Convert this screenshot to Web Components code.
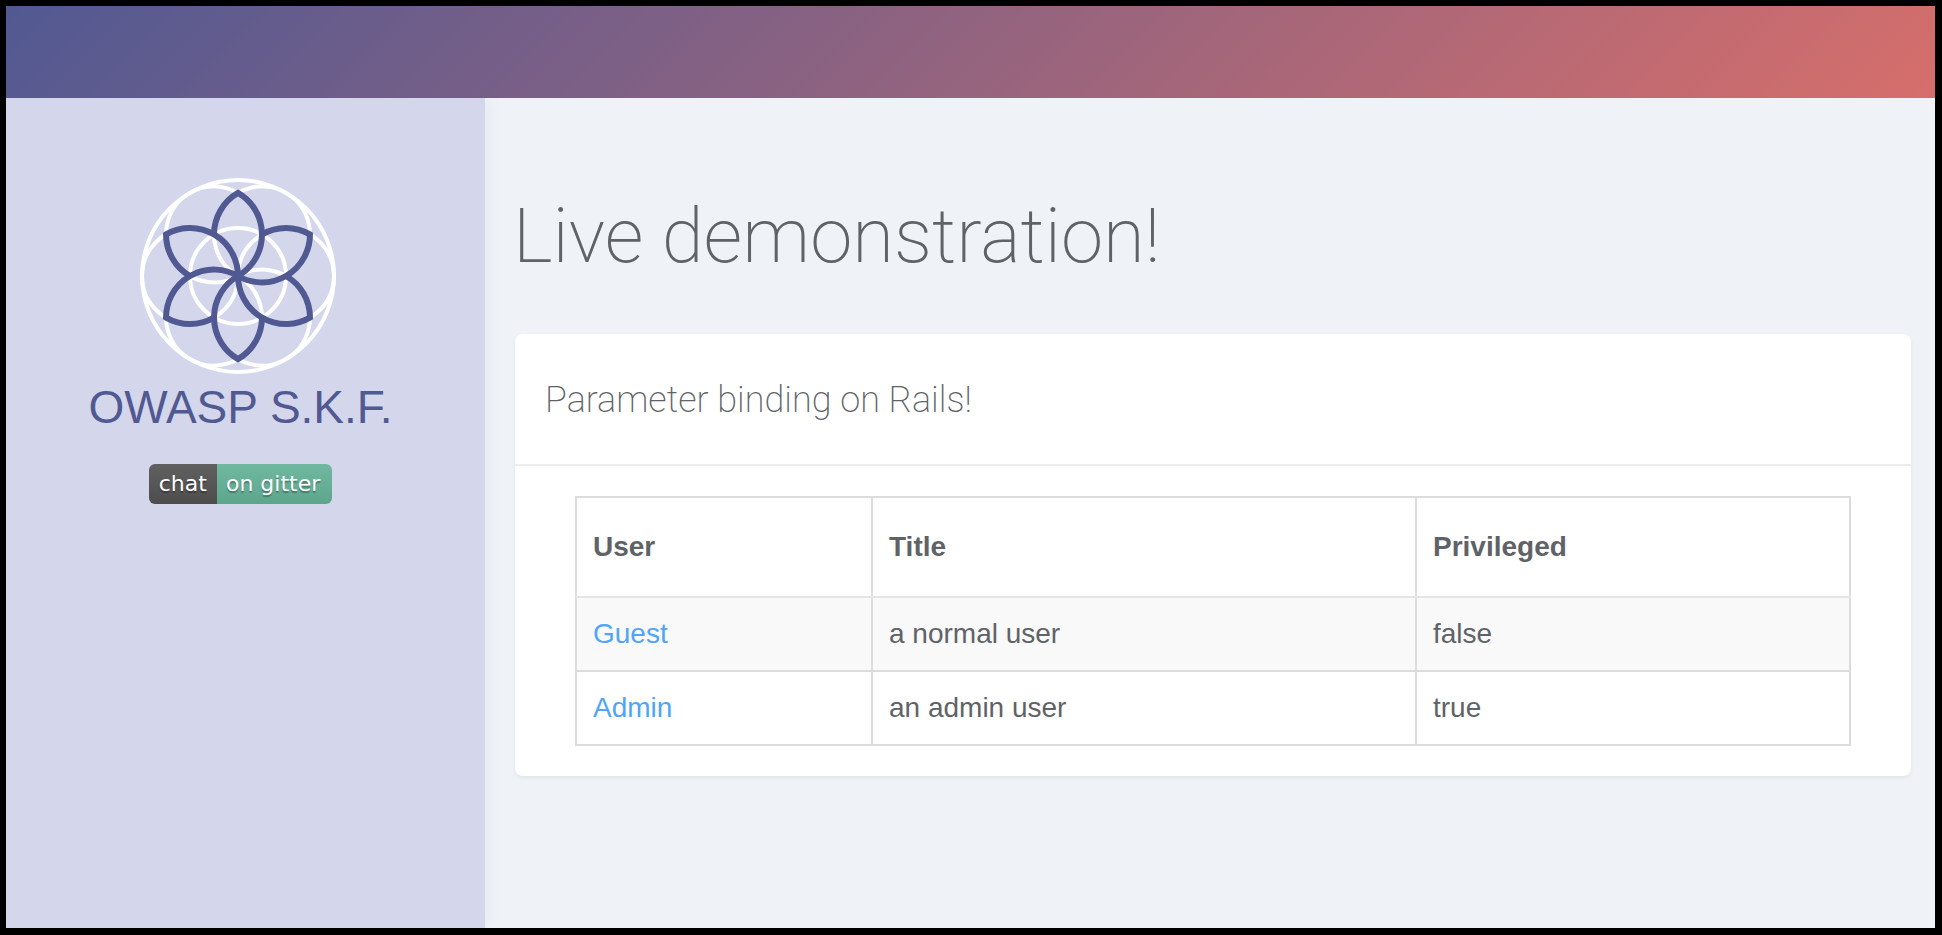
<!DOCTYPE html>
<html lang="en">
<head>
  <meta charset="utf-8">
  <title>Live demonstration!</title>
  <style>
    html, body {
      height: 100%;
      margin: 0;
    }
    body {
      background: #000;
      color: #5f6367;
      font-family: "Helvetica Neue", "Liberation Sans", Arial, sans-serif;
      font-size: 28px;
      line-height: 40px;
    }
  </style>
</head>
<body>
  <skf-app>
    <skf-sidebar slot="sidebar">
      <skf-logo></skf-logo>
      <skf-badge label="chat" message="on gitter"></skf-badge>
    </skf-sidebar>
    <skf-card heading="Parameter binding on Rails!">
      <user-table></user-table>
    </skf-card>
  </skf-app>

  <script>
    class SkfApp extends HTMLElement {
      constructor() {
        super();
        this.attachShadow({ mode: 'open' });
        this.shadowRoot.innerHTML = `
          <style>
            :host {
              display: flex;
              flex-direction: column;
              box-sizing: border-box;
              min-height: 100%;
              border: 6px solid #000;
              border-width: 6px 7px 7px 6px;
            }
            header {
              flex: none;
              height: 92px;
              background: linear-gradient(135deg, #515992, #d66e6b);
            }
            .body {
              display: flex;
              flex: 1;
              background: #eff3f7;
              overflow: hidden;
            }
            main {
              flex: 1;
              padding: 94px 24px 24px 28px;
            }
            h1 {
              margin: 0 0 54px;
              font-family: Roboto, sans-serif;
              font-size: 76px;
              font-weight: 200;
              line-height: 88px;
            }
            .content {
              padding-left: 2px;
            }
          </style>
          <header></header>
          <div class="body">
            <slot name="sidebar"></slot>
            <main>
              <h1>Live demonstration!</h1>
              <div class="content"><slot></slot></div>
            </main>
          </div>
        `;
      }
    }

    class SkfSidebar extends HTMLElement {
      constructor() {
        super();
        this.attachShadow({ mode: 'open' });
        this.shadowRoot.innerHTML = `
          <style>
            :host {
              display: flex;
              flex-direction: column;
              align-items: center;
              gap: 28px;
              box-sizing: border-box;
              flex: none;
              width: 479px;
              padding: 80px 10px 0 0;
              background: #d4d6eb;
              box-shadow: 0 0 20px rgba(0, 0, 0, 0.05);
            }
          </style>
          <slot></slot>
        `;
      }
    }

    // Flower of life: seven white circles in a ring, six petals on top
    class SkfLogo extends HTMLElement {
      constructor() {
        super();
        this.attachShadow({ mode: 'open' });

        const angles = [0, 60, 120, 180, 240, 300];
        const circles = angles
          .map(a => `<circle cx="48" r="48" transform="rotate(${a})"/>`)
          .join('');
        const petals = angles
          .map(a => `<path d="M-24-41.6A48 48 0 0 1 0-83.1A48 48 0 0 1 0 0" transform="rotate(${a})"/>`)
          .join('');

        this.shadowRoot.innerHTML = `
          <style>
            :host {
              display: flex;
              flex-direction: column;
              align-items: center;
              color: #515992;
              font-size: 46px;
              line-height: 56px;
            }
            svg {
              display: block;
              width: 196px;
              height: 196px;
              margin-right: 4px;
            }
            .name {
              padding: 5px 0 1px;
            }
          </style>
          <svg viewBox="-98 -98 196 196" fill="none" aria-hidden="true">
            <g stroke="#fff" stroke-width="4">
              <circle r="96"/>
              <circle r="48"/>
              ${circles}
            </g>
            <g stroke="currentColor" stroke-width="6">${petals}</g>
          </svg>
          <div class="name">OWASP S.K.F.</div>
        `;
      }
    }

    class SkfBadge extends HTMLElement {
      constructor() {
        super();
        this.attachShadow({ mode: 'open' });
        this.shadowRoot.innerHTML = `
          <style>
            :host {
              display: block;
            }
            a {
              display: flex;
              border-radius: 6px;
              overflow: hidden;
              color: #fff;
              font-family: "DejaVu Sans", Verdana, sans-serif;
              font-size: 22px;
              line-height: 40px;
              text-decoration: none;
              text-shadow: 0 2px 1px rgba(1, 1, 1, 0.3);
            }
            .label {
              padding: 0 10px;
              background: linear-gradient(#606060, #4d4d4d);
            }
            .message {
              padding: 0 12px 0 9px;
              background: linear-gradient(#70b8a0, #5ea58d);
            }
          </style>
          <a href="#"><span class="label"></span><span class="message"></span></a>
        `;
      }

      connectedCallback() {
        this.shadowRoot.querySelector('.label').textContent = this.getAttribute('label');
        this.shadowRoot.querySelector('.message').textContent = this.getAttribute('message');
      }
    }

    class SkfCard extends HTMLElement {
      constructor() {
        super();
        this.attachShadow({ mode: 'open' });
        this.shadowRoot.innerHTML = `
          <style>
            :host {
              display: block;
              background: #fff;
              border-radius: 8px;
              box-shadow: 0 2px 4px rgba(0, 0, 0, 0.06);
            }
            h2 {
              margin: 0;
              padding: 46px 30px 44px;
              border-bottom: 2px solid #ebedef;
              font-family: Roboto, sans-serif;
              font-size: 36px;
              font-weight: 200;
              line-height: 40px;
            }
            .content {
              padding: 30px 60px;
            }
          </style>
          <h2></h2>
          <div class="content"><slot></slot></div>
        `;
      }

      connectedCallback() {
        this.shadowRoot.querySelector('h2').textContent = this.getAttribute('heading');
      }
    }

    class UserTable extends HTMLElement {
      constructor() {
        super();
        this.attachShadow({ mode: 'open' });
        this.shadowRoot.innerHTML = `
          <style>
            :host {
              display: block;
            }
            table {
              width: 100%;
              border-collapse: collapse;
              table-layout: fixed;
              border: 2px solid #dcdcdc;
            }
            th, td {
              box-sizing: border-box;
              padding: 16px;
              border: 2px solid #dcdcdc;
              text-align: left;
            }
            th {
              padding: 29px 16px;
              border-bottom-color: #e5e5e5;
            }
            tbody tr:nth-child(odd) {
              background: #f9f9f9;
            }
            .user {
              width: 296px;
            }
            .title {
              width: 544px;
            }
            a {
              color: #4fa5f7;
              text-decoration: none;
            }
          </style>
          <table>
            <colgroup><col class="user"><col class="title"><col></colgroup>
            <thead>
              <tr><th>User</th><th>Title</th><th>Privileged</th></tr>
            </thead>
            <tbody></tbody>
          </table>
        `;
        this.update([
          { user: 'Guest', title: 'a normal user', privileged: false },
          { user: 'Admin', title: 'an admin user', privileged: true }
        ]);
      }

      update(users) {
        const body = this.shadowRoot.querySelector('tbody');
        body.innerHTML = '';
        for (const item of users) {
          const row = body.insertRow();
          const link = document.createElement('a');
          link.href = '#';
          link.textContent = item.user;
          row.insertCell().appendChild(link);
          row.insertCell().textContent = item.title;
          row.insertCell().textContent = item.privileged;
        }
      }
    }

    customElements.define('skf-app', SkfApp);
    customElements.define('skf-sidebar', SkfSidebar);
    customElements.define('skf-logo', SkfLogo);
    customElements.define('skf-badge', SkfBadge);
    customElements.define('skf-card', SkfCard);
    customElements.define('user-table', UserTable);
  </script>
</body>
</html>
